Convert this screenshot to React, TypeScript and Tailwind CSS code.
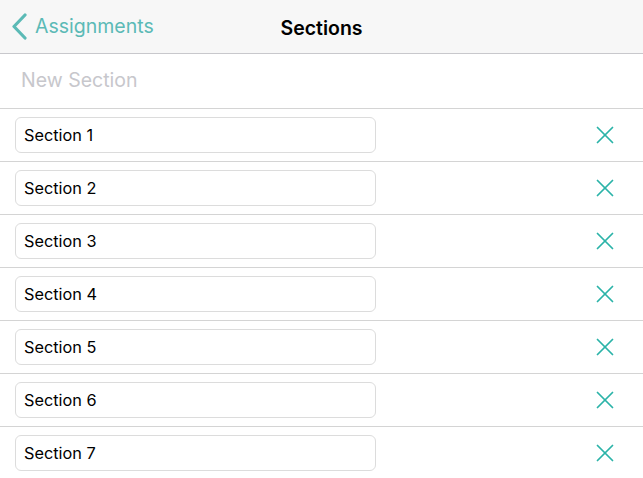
import { X } from "lucide-react";

const sections = [
  "Section 1",
  "Section 2",
  "Section 3",
  "Section 4",
  "Section 5",
  "Section 6",
  "Section 7",
];

export default function App() {
  return (
    <div className="h-[478px] w-[643px] overflow-hidden bg-white font-['Inter',sans-serif]">
      {/* Navigation bar */}
      <div className="relative flex h-[54px] items-center border-b border-[#c8c8cc] bg-[#f7f7f7]">
        <button className="flex items-center pl-[11px] text-[19.5px] text-[#5bbab6]">
          <svg width="17" height="27" viewBox="0 0 17 27" className="mr-[7px]">
            <path
              d="M14 2 L3 13.5 L14 25"
              fill="none"
              stroke="#5bbab6"
              strokeWidth="3.2"
              strokeLinecap="round"
              strokeLinejoin="round"
            />
          </svg>
          <span>Assignments</span>
        </button>
        <div className="absolute left-1/2 top-[14px] -translate-x-1/2 text-[19.5px] font-semibold text-black">
          Sections
        </div>
      </div>

      {/* New section row */}
      <div className="flex h-[55px] items-center border-b border-[#d4d4d4] pl-[21px] text-[19.5px] text-[#c7c7cc]">
        New Section
      </div>

      {sections.map((name) => (
        <div
          key={name}
          className="flex h-[53px] items-center border-b border-[#d4d4d4] pl-[15px]"
        >
          <div className="flex h-[36px] w-[361px] items-center rounded-[6px] border border-[#dcdcdc] pl-[8px] text-[16.3px] text-black">
            {name}
          </div>
          <div className="ml-auto mr-[23px] flex items-center">
            <X className="h-[30px] w-[30px] text-[#2bb3a8]" strokeWidth={1.4} />
          </div>
        </div>
      ))}
    </div>
  );
}
